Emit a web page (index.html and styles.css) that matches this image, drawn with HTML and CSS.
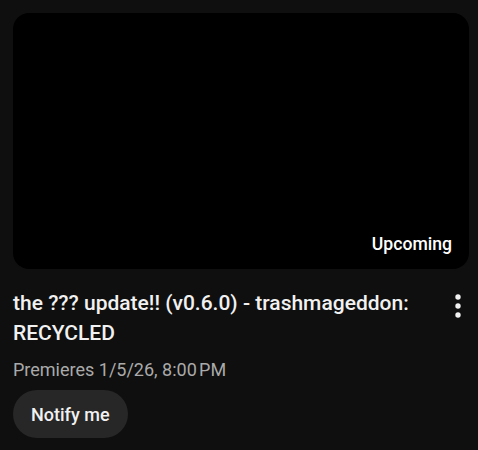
FILE: index.html
```html
<!DOCTYPE html>
<html>
<head>
<meta charset="utf-8">
<link rel="stylesheet" href="styles.css">
</head>
<body>
<div class="card">
  <div class="thumb">
    <span class="badge">Upcoming</span>
  </div>
  <div class="details">
    <h3 class="title">the ??? update!! (v0.6.0) - trashmageddon: RECYCLED</h3>
    <button class="menu" aria-label="More actions">
      <svg width="24" height="30" viewBox="0 0 24 30"><circle cx="12" cy="9" r="2.7" fill="#f1f1f1"/><circle cx="12" cy="18" r="2.7" fill="#f1f1f1"/><circle cx="12" cy="27" r="2.7" fill="#f1f1f1"/></svg>
    </button>
  </div>
  <div class="meta">Premieres 1/5/26, 8:00&#8239;PM</div>
  <button class="notify">Notify me</button>
</div>
</body>
</html>
```
FILE: styles.css
```css
html, body {
  margin: 0;
  background: #0f0f0f;
}
body {
  padding: 13px;
  font-family: Roboto, "Liberation Sans", sans-serif;
  color: #f1f1f1;
}
.card {
  width: 456px;
  display: flex;
  flex-direction: column;
}
.thumb {
  position: relative;
  width: 456px;
  height: 256px;
  background: #000;
  border-radius: 16px;
}
.badge {
  position: absolute;
  right: 17px;
  bottom: 15px;
  font-size: 17.6px;
  font-weight: 500;
  color: #fff;
}
.details {
  display: flex;
  align-items: flex-start;
  margin-top: 19px;
}
.title {
  flex: 1;
  margin: 0;
  font-size: 21px;
  line-height: 30px;
  font-weight: 500;
  color: #f1f1f1;
}
.menu {
  border: 0;
  background: none;
  padding: 0;
  width: 24px;
  height: 30px;
  margin-right: -1px;
  display: flex;
  align-items: flex-start;
  justify-content: center;
}
.meta {
  margin-top: 10px;
  font-size: 18px;
  line-height: 24px;
  color: #aaa;
}
.notify {
  align-self: flex-start;
  margin-top: 8px;
  height: 48px;
  padding: 0 18px;
  border: 0;
  border-radius: 24px;
  background: #272727;
  color: #f1f1f1;
  font-family: Roboto, "Liberation Sans", sans-serif;
  font-size: 18px;
  font-weight: 500;
}
```
